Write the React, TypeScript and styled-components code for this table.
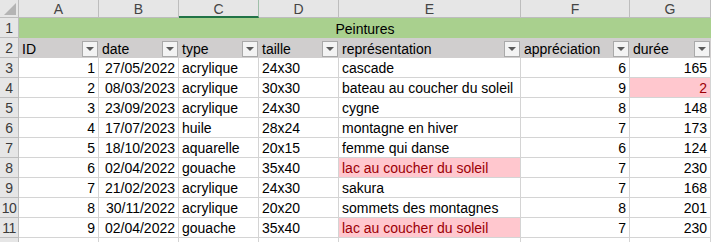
import React from "react";
import styled, { createGlobalStyle } from "styled-components";

const GlobalStyle = createGlobalStyle`
  body {
    margin: 0;
    background: #ffffff;
    font-family: "Liberation Sans", Arial, sans-serif;
  }
`;

const COLS = [
  { key: "A", width: 80 },
  { key: "B", width: 80 },
  { key: "C", width: 80 },
  { key: "D", width: 80 },
  { key: "E", width: 182 },
  { key: "F", width: 109 },
  { key: "G", width: 81 },
];

const HEADERS = ["ID", "date", "type", "taille", "représentation", "appréciation", "durée"];

type Row = [number, string, string, string, string, number, number];

const ROWS: Row[] = [
  [1, "27/05/2022", "acrylique", "24x30", "cascade", 6, 165],
  [2, "08/03/2023", "acrylique", "30x30", "bateau au coucher du soleil", 9, 2],
  [3, "23/09/2023", "acrylique", "24x30", "cygne", 8, 148],
  [4, "17/07/2023", "huile", "28x24", "montagne en hiver", 7, 173],
  [5, "18/10/2023", "aquarelle", "20x15", "femme qui danse", 6, 124],
  [6, "02/04/2022", "gouache", "35x40", "lac au coucher du soleil", 7, 230],
  [7, "21/02/2023", "acrylique", "24x30", "sakura", 7, 168],
  [8, "30/11/2022", "acrylique", "20x20", "sommets des montagnes", 8, 201],
  [9, "02/04/2022", "gouache", "35x40", "lac au coucher du soleil", 7, 230],
];

// cells with the conditional formatting (pink fill, dark red text)
const isFlagged = (row: Row, col: number) =>
  (col === 4 && row[4] === "lac au coucher du soleil") || (col === 6 && row[6] < 10);

// right-aligned columns: ID, date, appréciation, durée
const RIGHT = [true, true, false, false, false, true, true];

const Sheet = styled.div`
  display: grid;
  grid-template-columns: 19px ${COLS.map((c) => `${c.width}px`).join(" ")};
  grid-template-rows: 18px repeat(11, 20px) 20px;
  width: 711px;
  height: 242px;
  overflow: hidden;
  font-size: 14px;
  color: #000;
`;

const Corner = styled.div`
  background: #e6e6e6;
  border-right: 1px solid #bdbdbd;
  border-bottom: 1px solid #bdbdbd;
  position: relative;
  box-sizing: border-box;

  &::after {
    content: "";
    position: absolute;
    right: 2px;
    bottom: 2px;
    border-style: solid;
    border-width: 0 0 12px 12px;
    border-color: transparent transparent #b4b4b4 transparent;
  }
`;

const ColHeader = styled.div<{ $active?: boolean }>`
  display: flex;
  align-items: center;
  justify-content: center;
  background: #e6e6e6;
  color: #444;
  box-sizing: border-box;
  border-right: 1px solid ${(p) => (p.$active ? "#9fbfa9" : "#bdbdbd")};
  border-bottom: ${(p) => (p.$active ? "2px solid #217346" : "1px solid #bdbdbd")};
  padding-top: ${(p) => (p.$active ? "1px" : "0")};
  font-size: 14px;
`;

const RowHeader = styled.div`
  display: flex;
  align-items: center;
  justify-content: center;
  background: #e6e6e6;
  color: #3b3b3b;
  box-sizing: border-box;
  border-right: 1px solid #bdbdbd;
  border-bottom: 1px solid #bdbdbd;
  font-size: 14px;
  letter-spacing: -0.5px;
`;

const TitleCell = styled.div`
  grid-column: 2 / span 7;
  display: flex;
  align-items: center;
  justify-content: center;
  background: #a9d08e;
  box-sizing: border-box;
  padding-top: 1px;
`;

const HeadCell = styled.div`
  display: flex;
  align-items: center;
  justify-content: space-between;
  background: #d0cece;
  box-sizing: border-box;
  padding: 1px 1px 0 3px;
  white-space: nowrap;
`;

const FilterButton = styled.span`
  display: inline-flex;
  align-items: center;
  justify-content: center;
  width: 16px;
  height: 16px;
  box-sizing: border-box;
  border: 1px solid #a9a9a9;
  background: #f3f3f3;

  &::after {
    content: "";
    border-style: solid;
    border-width: 4px 4px 0 4px;
    border-color: #5a5a5a transparent transparent transparent;
  }
`;

const Cell = styled.div<{ $right?: boolean; $flag?: boolean }>`
  display: flex;
  align-items: center;
  justify-content: ${(p) => (p.$right ? "flex-end" : "flex-start")};
  padding: 1px ${(p) => (p.$right ? "3px" : "0")} 0 ${(p) => (p.$right ? "0" : "3px")};
  box-sizing: border-box;
  white-space: nowrap;
  overflow: hidden;
  background: ${(p) => (p.$flag ? "#ffc7ce" : "#ffffff")};
  color: ${(p) => (p.$flag ? "#9c0006" : "#000")};
  border-right: 1px solid #d4d4d4;
  border-bottom: 1px solid #d4d4d4;
`;

export default function App() {
  return (
    <>
      <GlobalStyle />
      <Sheet>
        <Corner />
        {COLS.map((c) => (
          <ColHeader key={c.key} $active={c.key === "C"}>
            {c.key}
          </ColHeader>
        ))}

        <RowHeader>1</RowHeader>
        <TitleCell>Peintures</TitleCell>

        <RowHeader>2</RowHeader>
        {HEADERS.map((h) => (
          <HeadCell key={h}>
            <span>{h}</span>
            <FilterButton />
          </HeadCell>
        ))}

        {ROWS.map((row, r) => (
          <React.Fragment key={r}>
            <RowHeader>{r + 3}</RowHeader>
            {row.map((v, c) => (
              <Cell key={c} $right={RIGHT[c]} $flag={isFlagged(row, c)}>
                {v}
              </Cell>
            ))}
          </React.Fragment>
        ))}

        {/* row 12 is only a sliver at the bottom edge */}
        <RowHeader />
        {COLS.map((c) => (
          <Cell key={c.key} />
        ))}
      </Sheet>
    </>
  );
}
